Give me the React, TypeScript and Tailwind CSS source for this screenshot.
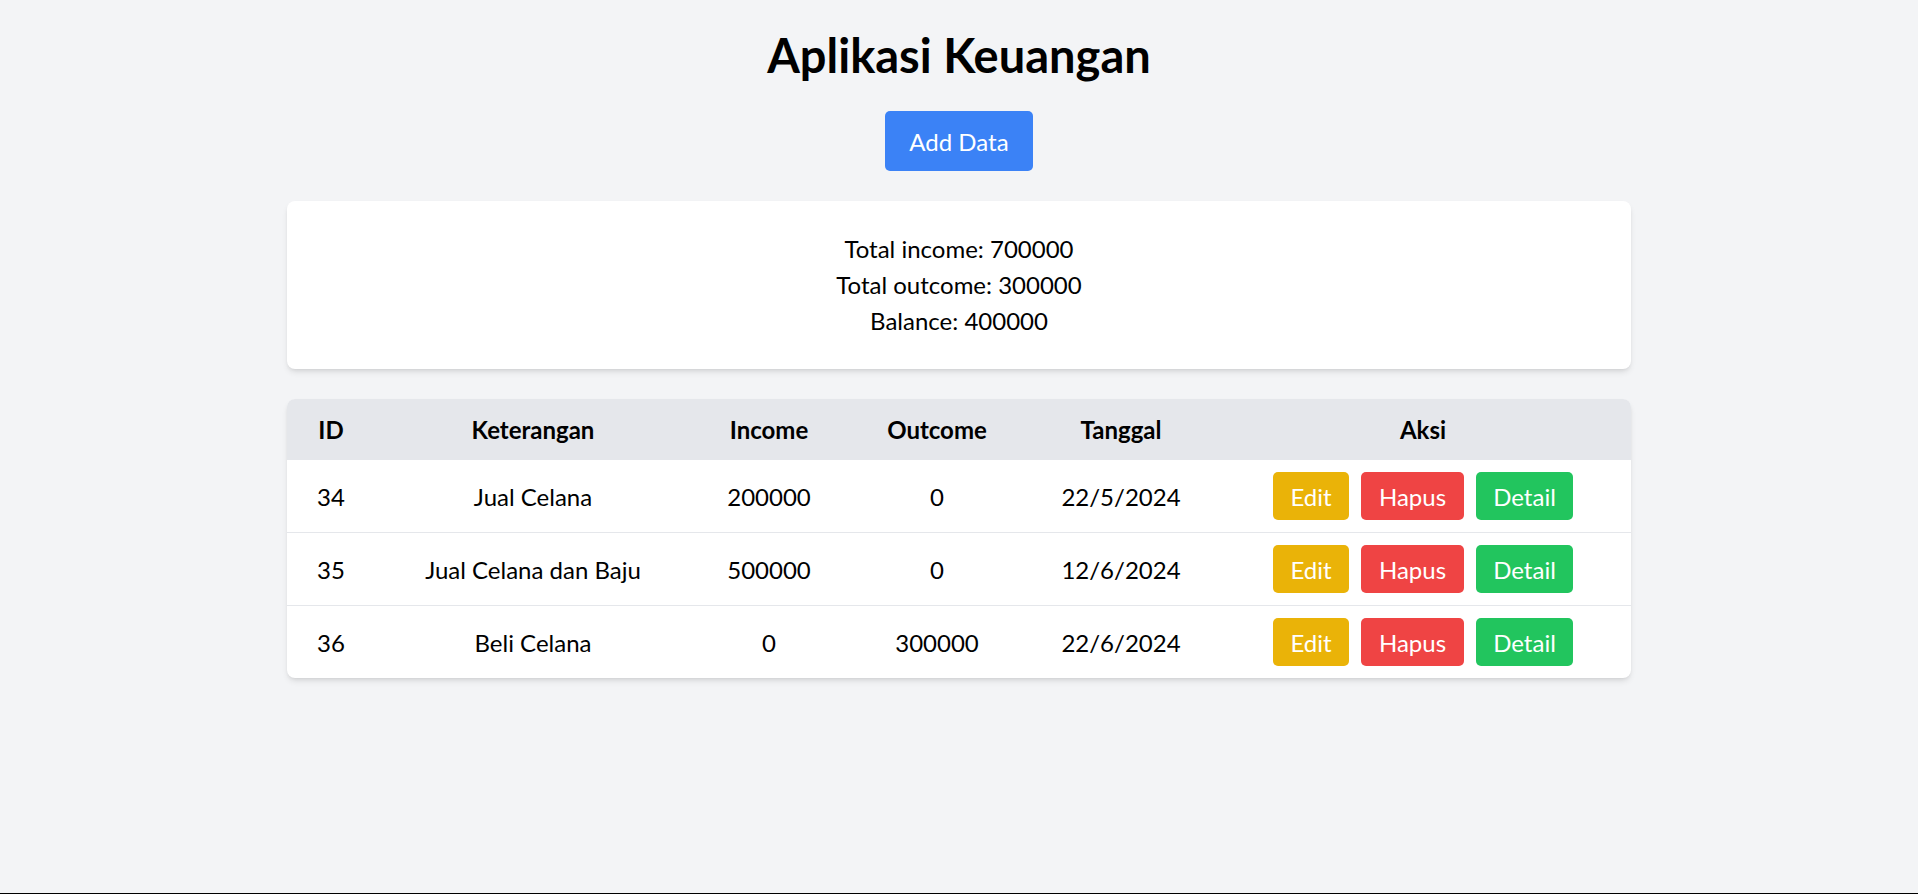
type Row = {
  id: number;
  keterangan: string;
  income: number;
  outcome: number;
  tanggal: string;
};

const rows: Row[] = [
  { id: 34, keterangan: "Jual Celana", income: 200000, outcome: 0, tanggal: "22/5/2024" },
  { id: 35, keterangan: "Jual Celana dan Baju", income: 500000, outcome: 0, tanggal: "12/6/2024" },
  { id: 36, keterangan: "Beli Celana", income: 0, outcome: 300000, tanggal: "22/6/2024" },
];

export default function App() {
  const totalIncome = rows.reduce((sum, r) => sum + r.income, 0);
  const totalOutcome = rows.reduce((sum, r) => sum + r.outcome, 0);

  return (
    <div className="h-[894px] border-b border-black bg-[#f3f4f6] pt-[30px] font-['Lato',sans-serif] text-black">
      <h1 className="text-center text-[47px] leading-[50px] font-bold">Aplikasi Keuangan</h1>

      <div className="mt-[31px] flex justify-center">
        <button
          type="button"
          className="h-[60px] w-[148px] rounded-[5px] bg-[#3b82f6] text-[24px] leading-[35px] text-white"
        >
          Add Data
        </button>
      </div>

      <div className="mx-auto mt-[30px] w-[1344px] rounded-[8px] bg-white p-[30px] text-center text-[24px] leading-[36px] shadow-md">
        <p>Total income: {totalIncome}</p>
        <p>Total outcome: {totalOutcome}</p>
        <p>Balance: {totalIncome - totalOutcome}</p>
      </div>

      <div className="mx-auto mt-[30px] w-[1344px] overflow-hidden rounded-[8px] bg-white shadow-md">
        <table className="w-full table-fixed border-collapse text-center text-[24px] leading-[35px]">
          <colgroup>
            <col className="w-[88px]" />
            <col className="w-[316px]" />
            <col className="w-[156px]" />
            <col className="w-[180px]" />
            <col className="w-[188px]" />
            <col className="w-[416px]" />
          </colgroup>
          <thead className="bg-[#e5e7eb]">
            <tr>
              <th className="py-[13px] font-bold">ID</th>
              <th className="py-[13px] font-bold">Keterangan</th>
              <th className="py-[13px] font-bold">Income</th>
              <th className="py-[13px] font-bold">Outcome</th>
              <th className="py-[13px] font-bold">Tanggal</th>
              <th className="py-[13px] font-bold">Aksi</th>
            </tr>
          </thead>
          <tbody>
            {rows.map((r, i) => (
              <tr key={r.id} className={i > 0 ? "border-t border-[#e5e7eb]" : ""}>
                <td className="py-3">{r.id}</td>
                <td className="py-3">{r.keterangan}</td>
                <td className="py-3">{r.income}</td>
                <td className="py-3">{r.outcome}</td>
                <td className="py-3">{r.tanggal}</td>
                <td className="py-3">
                  <div className="flex justify-center gap-[12px]">
                    <button type="button" className="h-[48px] w-[76px] rounded-[5px] bg-[#eab308] text-white">
                      Edit
                    </button>
                    <button type="button" className="h-[48px] w-[103px] rounded-[5px] bg-[#ef4444] text-white">
                      Hapus
                    </button>
                    <button type="button" className="h-[48px] w-[97px] rounded-[5px] bg-[#22c55e] text-white">
                      Detail
                    </button>
                  </div>
                </td>
              </tr>
            ))}
          </tbody>
        </table>
      </div>
    </div>
  );
}
